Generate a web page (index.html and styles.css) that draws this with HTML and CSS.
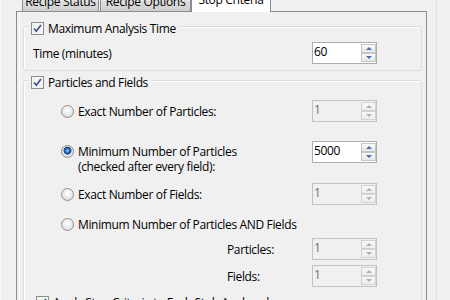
FILE: index.html
```html
<!DOCTYPE html>
<html lang="en">
<head>
    <meta charset="UTF-8">
    <link rel="stylesheet" href="styles.css">
    <title>Stop Criteria</title>
</head>
<body>

<div class="frame">

    <div class="tabs">
        <div class="tab tab-status">Recipe Status</div>
        <div class="tab tab-options">Recipe Options</div>
        <div class="tab tab-stop active">Stop Criteria</div>
    </div>

    <div class="page">

        <div class="group group-time">
            <div class="legend"><span class="check on"><svg width="9" height="9" viewBox="0 0 9 9"><path d="M1 4.5 L3.3 7.2 L8 1" /></svg></span>Maximum Analysis Time</div>
            <div class="field">
                <span>Time (minutes)</span>
                <div class="spin">
                    <span class="val">60</span>
                    <span class="arrows"><span class="btn"><i class="up"></i></span><span class="btn"><i class="down"></i></span></span>
                </div>
            </div>
        </div>

        <div class="group group-particles">
            <div class="legend"><span class="check on"><svg width="9" height="9" viewBox="0 0 9 9"><path d="M1 4.5 L3.3 7.2 L8 1" /></svg></span>Particles and Fields</div>

            <div class="opt opt-first">
                <span class="choice"><span class="radio"></span>Exact Number of Particles:</span>
                <div class="spin off">
                    <span class="val">1</span>
                    <span class="arrows"><span class="btn"><i class="up"></i></span><span class="btn"><i class="down"></i></span></span>
                </div>
            </div>

            <div class="opt opt-two">
                <span class="choice"><span class="radio on"></span><span>Minimum Number of Particles<br>(checked after every field):</span></span>
                <div class="spin">
                    <span class="val">5000</span>
                    <span class="arrows"><span class="btn"><i class="up"></i></span><span class="btn"><i class="down"></i></span></span>
                </div>
            </div>

            <div class="opt opt-fields">
                <span class="choice"><span class="radio"></span>Exact Number of Fields:</span>
                <div class="spin off">
                    <span class="val">1</span>
                    <span class="arrows"><span class="btn"><i class="up"></i></span><span class="btn"><i class="down"></i></span></span>
                </div>
            </div>

            <div class="opt opt-both">
                <span class="choice"><span class="radio"></span>Minimum Number of Particles AND Fields</span>
            </div>

            <div class="sub sub-particles">
                <span class="sublabel">Particles:</span>
                <div class="spin off">
                    <span class="val">1</span>
                    <span class="arrows"><span class="btn"><i class="up"></i></span><span class="btn"><i class="down"></i></span></span>
                </div>
            </div>

            <div class="sub sub-fields">
                <span class="sublabel">Fields:</span>
                <div class="spin off">
                    <span class="val">1</span>
                    <span class="arrows"><span class="btn"><i class="up"></i></span><span class="btn"><i class="down"></i></span></span>
                </div>
            </div>

            <div class="apply">
                <span class="check on"><svg width="9" height="9" viewBox="0 0 9 9"><path d="M1 4.5 L3.3 7.2 L8 1" /></svg></span>Apply Stop Criteria to Each Stub Analyzed
            </div>
        </div>

    </div>
</div>

</body>
</html>
```

FILE: styles.css
```css
body {
    margin: 0;
    background-color: #f0f0f0;
    font-family: "Open Sans", "Segoe UI", sans-serif;
    font-size: 12px;
    letter-spacing: -0.35px;
    color: #000;
    overflow: hidden;
}

.frame {
    width: 437px;
    height: 300px;
    box-sizing: border-box;
    border-left: 1px solid #f8f8f8;
    border-right: 1px solid #dde4ea;
    overflow: hidden;
}

/* tab strip */

.tabs {
    display: flex;
    align-items: flex-end;
    height: 24px;
    margin: -13px 0 0 21px;
}

.tab {
    height: 21px;
    box-sizing: border-box;
    border: 1px solid #898c95;
    border-bottom: none;
    background: linear-gradient(#f2f2f2, #ebebeb 50%, #dddddd 50%, #cfcfcf);
    text-align: center;
    line-height: 15px;
    padding-top: 3px;
    white-space: nowrap;
}

.tab-status {
    width: 77px;
    margin-right: 1px;
}

.tab-options {
    width: 91px;
}

.tab-stop {
    width: 80px;
}

.tab.active {
    height: 25px;
    margin-bottom: -1px;
    padding-top: 4px;
    background: #fff;
    position: relative;
    z-index: 1;
}

/* page */

.page {
    margin-left: 15px;
    width: 411px;
    height: 290px;
    box-sizing: border-box;
    border: 1px solid #898c95;
    border-bottom: none;
    padding: 14px 4px 0 6px;
    box-shadow: inset 2px 0 0 #f0f0f0, inset 3px 0 0 #fbfbfb;
}

.group {
    border: 1px solid #d5dfe5;
    border-radius: 3px;
    box-shadow: inset 1px 1px 0 #fff;
    padding: 0 44px 6px 9px;
}

.group-particles {
    margin-top: 9px;
    padding-bottom: 20px;
}

/* the header sits over the top border */
.legend {
    display: flex;
    align-items: center;
    gap: 4px;
    width: fit-content;
    height: 18px;
    box-sizing: border-box;
    padding: 2px 3px 0 2px;
    margin: -9px 0 0 -4px;
    background: #f0f0f0;
    line-height: 15px;
}

/* check and radio */

.check {
    width: 13px;
    height: 13px;
    box-sizing: border-box;
    border: 1px solid #8e8f8f;
    background: #f4f4f4;
    display: flex;
    align-items: center;
    justify-content: center;
    flex: none;
}

.check svg {
    display: block;
}

.check path {
    fill: none;
    stroke: #3c5298;
    stroke-width: 1.7;
}

.radio {
    width: 13px;
    height: 13px;
    box-sizing: border-box;
    border-radius: 50%;
    border: 1px solid #8e8f8f;
    background: radial-gradient(circle at 50% 40%, #ffffff, #e6e6e6 60%, #cfcfcf);
    flex: none;
}

.radio.on {
    background:
        radial-gradient(circle at 50% 42%, #a8dcff 0, #2f86d8 1.6px, #114a93 3.3px, #4a5a70 3.8px, transparent 4.3px),
        radial-gradient(circle at 50% 40%, #ffffff, #e6e6e6 60%, #cfcfcf);
}

/* rows */

.field {
    display: flex;
    align-items: center;
    justify-content: space-between;
    height: 22px;
    margin-top: 6px;
}

.opt {
    display: flex;
    align-items: center;
    height: 22px;
    margin-left: 28px;
}

.choice {
    flex: 1;
    display: flex;
    align-items: center;
    gap: 4px;
    line-height: 15px;
}

.opt-first {
    margin-top: 10px;
}

.opt-two {
    margin-top: 19px;
    height: 33px;
    align-items: flex-start;
}

.opt-two .choice {
    align-items: flex-start;
    padding-top: 3px;
}

.opt-two .radio {
    margin-top: 1px;
}

.opt-fields {
    margin-top: 9px;
}

.opt-both {
    margin-top: 8px;
}

.sub {
    display: flex;
    align-items: center;
    height: 22px;
    padding-left: 194px;
}

.sublabel {
    flex: 1;
}

.sub-particles {
    margin-top: 3px;
}

.sub-fields {
    margin-top: 5px;
}

.apply {
    display: flex;
    align-items: center;
    gap: 4px;
    margin: 8px 0 0 3px;
    line-height: 15px;
}

/* numeric up/down */

.spin {
    width: 65px;
    height: 22px;
    box-sizing: border-box;
    border: 1px solid #abadb3;
    background: #fff;
    display: flex;
    flex: none;
}

.spin .val {
    flex: 1;
    padding-left: 1px;
    line-height: 17px;
}

.arrows {
    display: flex;
    flex-direction: column;
    margin-top: 1px;
}

.btn {
    width: 15px;
    height: 9px;
    box-sizing: border-box;
    border: 1px solid #c6c6c6;
    background: linear-gradient(#fafafa, #e6e6e6);
    display: flex;
    align-items: center;
    justify-content: center;
}

.up {
    border-left: 3px solid transparent;
    border-right: 3px solid transparent;
    border-bottom: 3px solid #4d6aa8;
}

.down {
    border-left: 3px solid transparent;
    border-right: 3px solid transparent;
    border-top: 3px solid #4d6aa8;
}

.spin.off {
    border-color: #bfc2c6;
    background: #f0f0f0;
    color: #6d6d6d;
}

.spin.off .btn {
    border-color: #d2d2d2;
    background: linear-gradient(#f8f8f8, #ececec);
}

.spin.off .up {
    border-bottom-color: #b0b0b0;
}

.spin.off .down {
    border-top-color: #b0b0b0;
}
```
